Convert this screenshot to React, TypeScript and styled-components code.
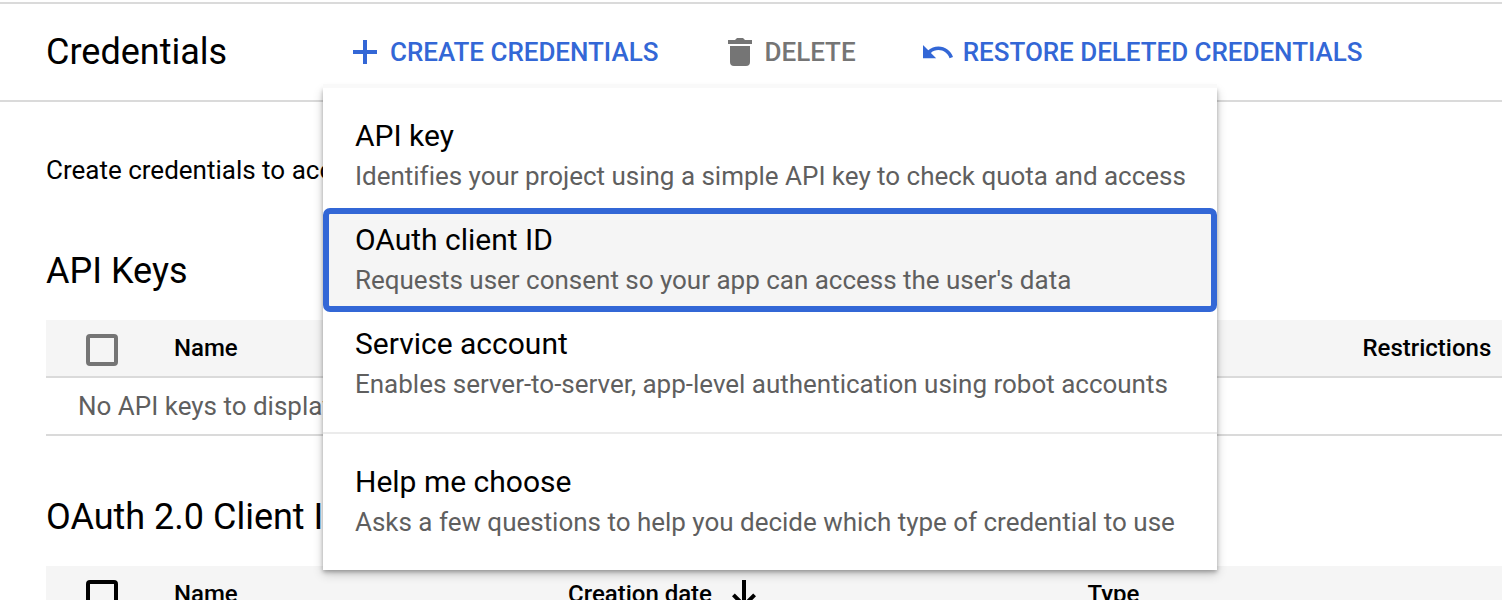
import React from "react";
import styled, { createGlobalStyle } from "styled-components";

const GlobalStyle = createGlobalStyle`
  * { box-sizing: border-box; }
  html, body { margin: 0; padding: 0; }
  body {
    height: 600px;
    overflow: hidden;
    background: #fff;
    color: #000;
    font-family: Roboto, "Liberation Sans", sans-serif;
  }
`;

const Page = styled.div`
  width: 1502px;
  height: 600px;
  overflow: hidden;
  padding-top: 2px;
  background: #fff;
`;

const Toolbar = styled.header`
  display: flex;
  align-items: center;
  height: 100px;
  padding-left: 46px;
  border-top: 2px solid #dadada;
  border-bottom: 2px solid #dadada;
`;

const PageTitle = styled.h1`
  width: 306px;
  margin: 0;
  font-size: 36px;
  font-weight: 400;
  line-height: 48px;
`;

const ActionSlot = styled.div<{ $gap: number }>`
  position: relative;
  margin-right: ${({ $gap }) => $gap}px;
`;

const Action = styled.button<{ $muted?: boolean }>`
  display: flex;
  align-items: center;
  padding: 0;
  border: 0;
  background: none;
  color: ${({ $muted }) => ($muted ? "#757575" : "#3367d6")};
  font: 500 26px/40px Roboto, "Liberation Sans", sans-serif;
  letter-spacing: -0.03px;
  white-space: nowrap;
`;

const ActionIcon = styled.svg<{ $size: number; $gap: number }>`
  flex: none;
  width: ${({ $size }) => $size}px;
  height: 28px;
  margin-right: ${({ $gap }) => $gap}px;
  fill: currentColor;
`;

const Menu = styled.div`
  position: absolute;
  z-index: 2;
  top: 56px;
  left: -29px;
  width: 894px;
  padding: 16px 0;
  background: #fff;
  box-shadow:
    0 -4px 0 #f9f9f9,
    0 2px 4px rgba(0, 0, 0, 0.28),
    0 4px 10px rgba(0, 0, 0, 0.2);
`;

const MenuItem = styled.div<{ $selected?: boolean }>`
  height: 104px;
  padding: ${({ $selected }) => ($selected ? "6px 26px" : "12px 32px")};
  border: ${({ $selected }) => ($selected ? "6px solid #3367d6" : "0")};
  border-radius: ${({ $selected }) => ($selected ? "7px" : "0")};
  background: ${({ $selected }) => ($selected ? "#f5f5f5" : "transparent")};
  white-space: nowrap;
`;

const ItemTitle = styled.div`
  font-size: 30px;
  line-height: 40px;
`;

const ItemText = styled.div`
  color: #5f5f5f;
  font-size: 26px;
  line-height: 40px;
  letter-spacing: -0.014px;
`;

const MenuDivider = styled.div`
  height: 2px;
  margin: 16px 0;
  background: #ebebeb;
`;

const Content = styled.main`
  padding-left: 46px;
`;

const Intro = styled.p`
  margin: 0;
  padding-top: 48px;
  font-size: 26px;
  line-height: 40px;
`;

const Section = styled.section<{ $space: number }>`
  padding-top: ${({ $space }) => $space}px;
`;

const SectionTitle = styled.h2`
  margin: 0 0 25px;
  font-size: 36px;
  font-weight: 400;
  line-height: 48px;
`;

const HeaderRow = styled.div<{ $columns: string }>`
  display: grid;
  grid-template-columns: ${({ $columns }) => $columns};
  align-items: center;
  height: 58px;
  border-bottom: 2px solid #dadada;
  background: #f5f5f5;
`;

const HeaderCell = styled.div`
  display: flex;
  align-items: center;
  height: 32px;
  font-size: 24px;
  font-weight: 500;
  line-height: 32px;
  letter-spacing: -0.01px;
  white-space: nowrap;
`;

const SortIcon = styled.svg`
  width: 24px;
  height: 30px;
  margin: 2px 0 0 20px;
  fill: currentColor;
`;

const Checkbox = styled.span<{ $color: string }>`
  width: 32px;
  height: 32px;
  margin: 4px 0 0 40px;
  border: 4px solid ${({ $color }) => $color};
  border-radius: 4px;
`;

const EmptyRow = styled.div`
  height: 58px;
  padding-left: 32px;
  border-bottom: 2px solid #dadada;
  color: #5f5f5f;
  font-size: 26px;
  line-height: 56px;
`;

export default function App() {
  return (
    <Page>
      <GlobalStyle />
      <Toolbar>
        <PageTitle>Credentials</PageTitle>
        <ActionSlot $gap={68.2}>
          <Action>
            <ActionIcon $size={26} $gap={12} viewBox="0 0 26 28">
              <path d="M11 2h4v10h10v4H15v10h-4V16H1v-4h10z" />
            </ActionIcon>
            CREATE CREDENTIALS
          </Action>
          <Menu>
            <MenuItem>
              <ItemTitle>API key</ItemTitle>
              <ItemText>Identifies your project using a simple API key to check quota and access</ItemText>
            </MenuItem>
            <MenuItem $selected>
              <ItemTitle>OAuth client ID</ItemTitle>
              <ItemText>Requests user consent so your app can access the user's data</ItemText>
            </MenuItem>
            <MenuItem>
              <ItemTitle>Service account</ItemTitle>
              <ItemText>Enables server-to-server, app-level authentication using robot accounts</ItemText>
            </MenuItem>
            <MenuDivider />
            <MenuItem>
              <ItemTitle>Help me choose</ItemTitle>
              <ItemText>Asks a few questions to help you decide which type of credential to use</ItemText>
            </MenuItem>
          </Menu>
        </ActionSlot>
        <ActionSlot $gap={66.2}>
          <Action $muted>
            <ActionIcon $size={26} $gap={12} viewBox="0 0 26 28">
              <path d="M1 2h7l2-2h6l2 2h7v4H1zM3 8h20v16q0 4-4 4H7q-4 0-4-4z" />
            </ActionIcon>
            DELETE
          </Action>
        </ActionSlot>
        <ActionSlot $gap={0}>
          <Action>
            <ActionIcon $size={32} $gap={9} viewBox="1.32 2.230 21.830 19.100">
              <path d="M12.500 8c-2.650 0-5.050.990-6.900 2.600L2 7v9h9l-3.620-3.620c1.390-1.160 3.160-1.880 5.120-1.880 3.540 0 6.550 2.310 7.600 5.500l2.370-.780C21.080 11.030 17.150 8 12.500 8z" />
            </ActionIcon>
            RESTORE DELETED CREDENTIALS
          </Action>
        </ActionSlot>
      </Toolbar>
      <Content>
        <Intro>Create credentials to access your enabled APIs</Intro>
        <Section $space={57}>
          <SectionTitle>API Keys</SectionTitle>
          <HeaderRow $columns="128px 1188.5px 1fr">
            <Checkbox $color="#757575" />
            <HeaderCell>Name</HeaderCell>
            <HeaderCell>Restrictions</HeaderCell>
          </HeaderRow>
          <EmptyRow>No API keys to display</EmptyRow>
        </Section>
        <Section $space={57}>
          <SectionTitle>OAuth 2.0 Client IDs</SectionTitle>
          <HeaderRow $columns="128px 394px 519.5px 1fr">
            <Checkbox $color="#000" />
            <HeaderCell>Name</HeaderCell>
            <HeaderCell>
              Creation date
              <SortIcon viewBox="0 0 24 30">
                <path d="M10 0h4v20.700l7.200-7.200L24 16.300l-12 12-12-12 2.800-2.800 7.200 7.200z" />
              </SortIcon>
            </HeaderCell>
            <HeaderCell>Type</HeaderCell>
          </HeaderRow>
        </Section>
      </Content>
    </Page>
  );
}
